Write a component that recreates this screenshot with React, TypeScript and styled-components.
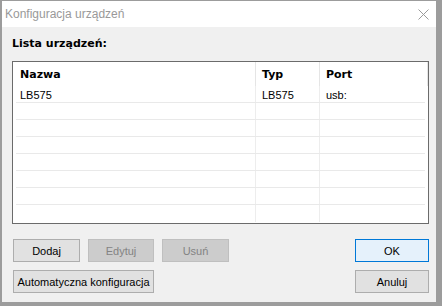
import React from "react";
import styled, { createGlobalStyle } from "styled-components";

const GlobalStyle = createGlobalStyle`
  html, body {
    margin: 0;
    padding: 0;
    background: #a3a3a3;
  }
  * {
    box-sizing: border-box;
  }
`;

const Window = styled.div`
  width: 442px;
  height: 306px;
  border-style: solid;
  border-color: #9c9c9c;
  border-width: 1px 6px 4px 2px;
  display: flex;
  flex-direction: column;
  background: #f0f0f0;
  font-family: "Liberation Sans", Arial, sans-serif;
  font-size: 11px;
  color: #000;
`;

const TitleBar = styled.div`
  height: 26px;
  background: #ffffff;
  display: flex;
  align-items: center;
  justify-content: space-between;
  padding: 0 7px 0 3px;
`;

const TitleText = styled.span`
  font-family: "Liberation Sans", Arial, sans-serif;
  font-size: 12px;
  color: #999999;
`;

const CloseButton = styled.div`
  width: 11px;
  height: 11px;
  display: flex;
  align-items: center;
  justify-content: center;
`;

const Body = styled.div`
  flex: 1;
  padding: 10px 7px 0 10px;
  display: flex;
  flex-direction: column;
`;

const SectionLabel = styled.div`
  font-family: "DejaVu Sans", sans-serif;
  font-weight: bold;
  font-size: 11px;
  line-height: 14px;
  height: 14px;
  margin-bottom: 10px;
`;

const ListBox = styled.div`
  height: 163px;
  border: 1px solid #6b6b6b;
  background: #ffffff;
  display: flex;
  flex-direction: column;
  overflow: hidden;
`;

const HeaderRow = styled.div`
  height: 24px;
  display: grid;
  grid-template-columns: 243px 64px 1fr;
`;

const HeaderCell = styled.div`
  font-family: "DejaVu Sans", sans-serif;
  font-weight: bold;
  font-size: 11px;
  display: flex;
  align-items: center;
  padding-left: 6px;
  border-right: 1px solid #e5e5e5;
  &:first-child {
    padding-left: 7px;
  }
`;

const Rows = styled.div`
  flex: 1;
  padding: 0 3px;
`;

const Row = styled.div<{ $last?: boolean }>`
  height: 17px;
  display: grid;
  grid-template-columns: 240px 64px 1fr;
  border-bottom: ${(p) => (p.$last ? "none" : "1px solid #e9e9e9")};
`;

const Cell = styled.div`
  display: flex;
  align-items: center;
  padding-left: 6px;
  padding-top: 1px;
  border-right: 1px solid #ededed;
  &:first-child {
    padding-left: 4px;
  }
  &:last-child {
    border-right: none;
  }
`;

const ButtonArea = styled.div`
  margin-top: 15px;
  display: grid;
  grid-template-columns: 1fr auto;
  row-gap: 8px;
  padding-left: 1px;
`;

const ButtonGroup = styled.div`
  display: flex;
  gap: 8px;
`;

const Button = styled.div<{ $width: number; $disabled?: boolean; $default?: boolean }>`
  width: ${(p) => p.$width}px;
  height: 23px;
  display: flex;
  align-items: center;
  justify-content: center;
  font-family: "Liberation Sans", Arial, sans-serif;
  font-size: 11px;
  border: 1px solid
    ${(p) => (p.$default ? "#0078d7" : p.$disabled ? "#bfbfbf" : "#adadad")};
  background: ${(p) => (p.$default ? "#e5f1fb" : p.$disabled ? "#cccccc" : "#e1e1e1")};
  color: ${(p) => (p.$disabled ? "#838383" : "#000000")};
`;

const rows = [
  { name: "LB575", type: "LB575", port: "usb:" },
  { name: "", type: "", port: "" },
  { name: "", type: "", port: "" },
  { name: "", type: "", port: "" },
  { name: "", type: "", port: "" },
  { name: "", type: "", port: "" },
  { name: "", type: "", port: "" },
  { name: "", type: "", port: "" },
];

export default function App() {
  return (
    <>
      <GlobalStyle />
      <Window>
        <TitleBar>
          <TitleText>Konfiguracja urządzeń</TitleText>
          <CloseButton>
            <svg width="11" height="11" viewBox="0 0 11 11">
              <path d="M0.5 0.5 L10.5 10.5 M10.5 0.5 L0.5 10.5" stroke="#9a9a9a" strokeWidth="1" />
            </svg>
          </CloseButton>
        </TitleBar>
        <Body>
          <SectionLabel>Lista urządzeń:</SectionLabel>
          <ListBox>
            <HeaderRow>
              <HeaderCell>Nazwa</HeaderCell>
              <HeaderCell>Typ</HeaderCell>
              <HeaderCell>Port</HeaderCell>
            </HeaderRow>
            <Rows>
              {rows.map((r, i) => (
                <Row key={i} $last={i === rows.length - 1}>
                  <Cell>{r.name}</Cell>
                  <Cell>{r.type}</Cell>
                  <Cell>{r.port}</Cell>
                </Row>
              ))}
            </Rows>
          </ListBox>
          <ButtonArea>
            <ButtonGroup>
              <Button $width={67}>Dodaj</Button>
              <Button $width={66} $disabled>
                Edytuj
              </Button>
              <Button $width={67} $disabled>
                Usuń
              </Button>
            </ButtonGroup>
            <Button $width={74} $default>
              OK
            </Button>
            <ButtonGroup>
              <Button $width={141}>Automatyczna konfiguracja</Button>
            </ButtonGroup>
            <Button $width={74}>Anuluj</Button>
          </ButtonArea>
        </Body>
      </Window>
    </>
  );
}
